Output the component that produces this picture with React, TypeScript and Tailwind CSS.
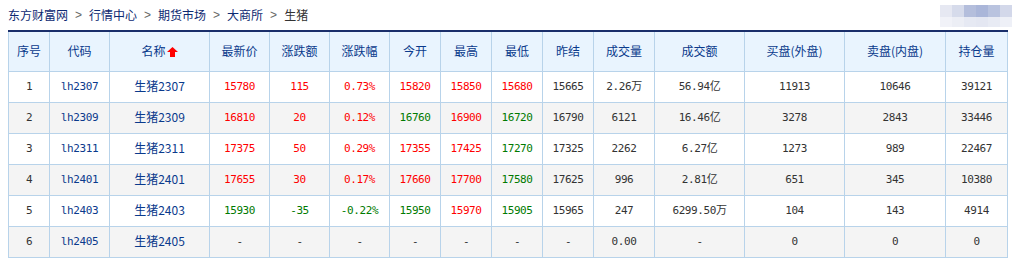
import React from "react";

type Cell = { v: string; c?: "r" | "g" | "k" };

const cols = [41, 60, 100, 60, 60, 60, 51, 51, 51, 51, 61, 90, 100, 101, 62];
const headers = ["序号", "代码", "名称", "最新价", "涨跌额", "涨跌幅", "今开", "最高", "最低", "昨结", "成交量", "成交额", "买盘(外盘)", "卖盘(内盘)", "持仓量"];

const rows: { code: string; name: string; cells: Cell[] }[] = [
  { code: "lh2307", name: "生猪2307", cells: [
    { v: "15780", c: "r" }, { v: "115", c: "r" }, { v: "0.73%", c: "r" }, { v: "15820", c: "r" }, { v: "15850", c: "r" }, { v: "15680", c: "r" },
    { v: "15665" }, { v: "2.26万" }, { v: "56.94亿" }, { v: "11913" }, { v: "10646" }, { v: "39121" } ] },
  { code: "lh2309", name: "生猪2309", cells: [
    { v: "16810", c: "r" }, { v: "20", c: "r" }, { v: "0.12%", c: "r" }, { v: "16760", c: "g" }, { v: "16900", c: "r" }, { v: "16720", c: "g" },
    { v: "16790" }, { v: "6121" }, { v: "16.46亿" }, { v: "3278" }, { v: "2843" }, { v: "33446" } ] },
  { code: "lh2311", name: "生猪2311", cells: [
    { v: "17375", c: "r" }, { v: "50", c: "r" }, { v: "0.29%", c: "r" }, { v: "17355", c: "r" }, { v: "17425", c: "r" }, { v: "17270", c: "g" },
    { v: "17325" }, { v: "2262" }, { v: "6.27亿" }, { v: "1273" }, { v: "989" }, { v: "22467" } ] },
  { code: "lh2401", name: "生猪2401", cells: [
    { v: "17655", c: "r" }, { v: "30", c: "r" }, { v: "0.17%", c: "r" }, { v: "17660", c: "r" }, { v: "17700", c: "r" }, { v: "17580", c: "g" },
    { v: "17625" }, { v: "996" }, { v: "2.81亿" }, { v: "651" }, { v: "345" }, { v: "10380" } ] },
  { code: "lh2403", name: "生猪2403", cells: [
    { v: "15930", c: "g" }, { v: "-35", c: "g" }, { v: "-0.22%", c: "g" }, { v: "15950", c: "g" }, { v: "15970", c: "r" }, { v: "15905", c: "g" },
    { v: "15965" }, { v: "247" }, { v: "6299.50万" }, { v: "104" }, { v: "143" }, { v: "4914" } ] },
  { code: "lh2405", name: "生猪2405", cells: [
    { v: "-" }, { v: "-" }, { v: "-" }, { v: "-" }, { v: "-" }, { v: "-" },
    { v: "-" }, { v: "0.00" }, { v: "-" }, { v: "0" }, { v: "0" }, { v: "0" } ] },
];

const colorCls = (c?: string) =>
  c === "r" ? "text-[#ff0000]" : c === "g" ? "text-[#007a00]" : "text-[#333333]";

const mono = "font-['DejaVu_Sans_Mono','Noto_Sans_CJK_SC',monospace] text-[11px] leading-[14px] tracking-[-0.4px]";
const cjk = "font-['Noto_Sans_CJK_SC','Liberation_Sans',sans-serif]";

function UpArrow() {
  return (
    <svg width="11" height="10" viewBox="0 0 11 10" className="inline-block ml-[1px] align-[-1px]">
      <polygon points="5.5,0 11,5 8,5 8,10 3,10 3,5 0,5" fill="#ff0000" />
    </svg>
  );
}

function Blur() {
  const top = ["#e6e8f2", "#d6dbeb", "#b4bedc", "#aab6d9", "#b9c3df", "#d3d8ea"];
  const bot = ["#f1f2f8", "#eceef5", "#e6e9f3", "#e4e7f2", "#e8ebf4", "#eef0f7"];
  return (
    <div className="flex flex-col">
      <div className="flex">
        {top.map((c, i) => (
          <div key={i} className="w-[12px] h-[12px]" style={{ background: c }} />
        ))}
      </div>
      <div className="flex">
        {bot.map((c, i) => (
          <div key={i} className="w-[12px] h-[10px]" style={{ background: c }} />
        ))}
      </div>
    </div>
  );
}

export default function App() {
  const crumbs = ["东方财富网", "行情中心", "期货市场", "大商所"];
  return (
    <div className="w-[1013px] h-[262px] bg-white overflow-hidden relative">
      <div className={`h-[30px] pl-[8px] flex items-center text-[12px] leading-[14px] ${cjk}`}>
        {crumbs.map((c) => (
          <React.Fragment key={c}>
            <span className="text-[#0d2a72]">{c}</span>
            <span className="text-[#666] mx-[7px] font-['Liberation_Sans',sans-serif] text-[12px]">&gt;</span>
          </React.Fragment>
        ))}
        <span className="text-[#333]">生猪</span>
      </div>
      <div className="absolute left-[940px] top-[5px]">
        <Blur />
      </div>
      <div className="pl-[8px]">
        <table className="table-fixed border-collapse w-[999px] border-t-2 border-t-[#1a2e6a]">
          <colgroup>
            {cols.map((w, i) => (
              <col key={i} style={{ width: w }} />
            ))}
          </colgroup>
          <thead>
            <tr className="bg-[#e9f4fe]">
              {headers.map((h, i) => (
                <th
                  key={h}
                  className={`h-[40px] p-0 border border-[#b8d3ea] border-t-0 font-normal text-[12px] leading-[14px] text-[#0a3a8c] text-center align-middle ${cjk}`}
                >
                  {h}
                  {i === 2 && <UpArrow />}
                </th>
              ))}
            </tr>
          </thead>
          <tbody>
            {rows.map((r, ri) => (
              <tr key={r.code} className={ri % 2 === 1 ? "bg-[#f4f4f4]" : "bg-white"}>
                <td className={`h-[31px] p-0 border border-[#b8d3ea] text-center align-middle text-[#333] ${mono}`}>{ri + 1}</td>
                <td className={`p-0 border border-[#b8d3ea] text-center align-middle text-[#0a3a8c] ${mono}`}>{r.code}</td>
                <td className={`p-0 border border-[#b8d3ea] text-center align-middle text-[#0a3a8c] text-[12px] leading-[14px] ${cjk}`}>
                  <span className="relative top-[-1px]">{r.name}</span>
                </td>
                {r.cells.map((c, ci) => (
                  <td
                    key={ci}
                    className={`p-0 border border-[#b8d3ea] text-center align-middle whitespace-nowrap ${mono} ${colorCls(c.c)}`}
                  >
                    {c.v}
                  </td>
                ))}
              </tr>
            ))}
          </tbody>
        </table>
      </div>
    </div>
  );
}
